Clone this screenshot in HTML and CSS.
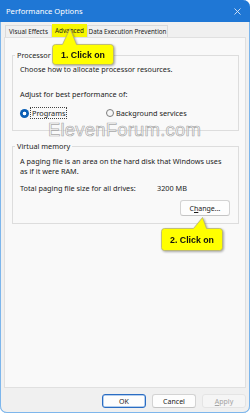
FILE: index.html
```html
<!DOCTYPE html>
<html>
<head>
<meta charset="utf-8">
<link rel="stylesheet" href="styles.css">
</head>
<body>
<div class="window">
  <div class="titlebar">
    <span class="title">Performance Options</span>
    <svg class="close" width="7" height="7" viewBox="0 0 7 7"><path d="M0.5 0.5L6.5 6.5M6.5 0.5L0.5 6.5" stroke="#dbe8f7" stroke-width="0.9" fill="none"/></svg>
  </div>
  <div class="tabs">
    <div class="tab tab-ve">Visual Effects</div>
    <div class="tab tab-adv">Advanced</div>
    <div class="tab tab-dep">Data Execution Prevention</div>
  </div>
  <div class="panel">
    <fieldset class="group group-proc">
      <legend>Processor</legend>
      <p>Choose how to allocate processor resources.</p>
      <p class="adjust">Adjust for best performance of:</p>
      <div class="radios">
        <div class="opt opt1"><span class="radio on"></span><span class="focus">Programs</span></div>
        <div class="opt"><span class="radio"></span><span>Background services</span></div>
      </div>
    </fieldset>
    <fieldset class="group group-vm">
      <legend>Virtual memory</legend>
      <p>A paging file is an area on the hard disk that Windows uses<br>as if it were RAM.</p>
      <div class="total"><span class="total-label">Total paging file size for all drives:</span><span>3200 MB</span></div>
      <div class="btnrow"><button class="btn change">C<u>h</u>ange...</button></div>
    </fieldset>
  </div>
  <div class="footer">
    <button class="btn ok">OK</button>
    <button class="btn">Cancel</button>
    <button class="btn disabled"><u>A</u>pply</button>
  </div>

  <div class="watermark">ElevenForum.com</div>

  <div class="callout c1">
    <svg width="62" height="37" viewBox="0 0 62 37"><path d="M3.5 16.5H10.5L18 0.5L24.5 16.5H58.5Q61.5 16.5 61.5 19.5V33.5Q61.5 36.5 58.5 36.5H3.5Q0.5 36.5 0.5 33.5V19.5Q0.5 16.5 3.5 16.5Z" fill="#ffff00" stroke="#b4b07a" stroke-width="0.8"/></svg>
    <span class="callout-text">1. Click on</span>
  </div>
  <div class="callout c2">
    <svg width="62" height="34" viewBox="0 0 62 34"><path d="M3.5 11.5H32.5L41.5 0.5L45.5 11.5H58.5Q61.5 11.5 61.5 14.5V30.5Q61.5 33.5 58.5 33.5H3.5Q0.5 33.5 0.5 30.5V14.5Q0.5 11.5 3.5 11.5Z" fill="#ffff00" stroke="#b4b07a" stroke-width="0.8"/></svg>
    <span class="callout-text">2. Click on</span>
  </div>
</div>
</body>
</html>
```
FILE: styles.css
```css
html, body {
  margin: 0;
  padding: 0;
  background: #ffffff;
}
body {
  font-family: "Noto Sans", "Open Sans", sans-serif;
  font-size: 7.3px;
  color: #1b1b1b;
}
.window {
  position: relative;
  width: 250px;
  height: 413px;
  box-sizing: border-box;
  background: #f0f0f0;
  border-radius: 0 7px 7px 7px;
  overflow: hidden;
  box-shadow: inset 1px 0 #7db6ec, inset -1px 0 #7db6ec, inset 0 -1px #7db6ec;
  display: flex;
  flex-direction: column;
}
.titlebar {
  height: 22px;
  flex: none;
  background: #1f77d5;
  color: #ffffff;
  display: flex;
  align-items: center;
  justify-content: space-between;
  padding: 0 9px 0 6px;
  font-size: 7.6px;
}
.close { display: block; }
.tabs {
  display: flex;
  height: 13px;
  margin: 2px 0 0 5px;
  flex: none;
}
.tab {
  box-sizing: border-box;
  height: 13px;
  line-height: 12px;
  text-align: center;
  white-space: nowrap;
  font-size: 6.3px;
  border: 1px solid #dadada;
  border-bottom: none;
  background: #f0f0f0;
}
.tab-ve { width: 47px; margin-top: 1px; height: 12px; line-height: 11px; }
.tab-adv { width: 35px; background: #f7f700; border-color: #f7f700; }
.tab-dep { width: 81px; margin-top: 1px; height: 12px; line-height: 11px; }
.panel {
  flex: none;
  box-sizing: border-box;
  height: 351px;
  margin: 0 4px;
  background: #f9f9f9;
  border: 1px solid #e0e0e0;
  padding-top: 12px;
}
.group {
  margin: 0 6px 0 7px;
  border: 1px solid #dddddd;
  padding: 4px 8px 12px 7px;
  min-width: 0;
}
.group legend {
  padding: 0 2px;
  margin-left: -5px;
  line-height: 10px;
  height: 10px;
}
.group p {
  margin: 0;
  line-height: 10px;
}
.adjust { margin-top: 15px !important; }
.radios {
  display: flex;
  margin-top: 9px;
  height: 10px;
  align-items: center;
}
.opt {
  display: flex;
  align-items: center;
  gap: 2px;
}
.opt1 { width: 86px; }
.radio {
  width: 8px;
  height: 8px;
  border-radius: 50%;
  box-sizing: border-box;
  border: 1px solid #7c7c7c;
  background: #f7f7f7;
}
.radio.on {
  width: 9px;
  height: 9px;
  border: none;
  background: radial-gradient(circle, #ffffff 0 1.7px, #0b5fb5 2.1px);
}
.focus {
  outline: 1px dotted #444444;
  padding: 0 1px;
  line-height: 10px;
}
.group-vm {
  margin-top: 10px;
  padding-top: 5px;
  padding-bottom: 7px;
}
.total {
  display: flex;
  margin-top: 7px;
  line-height: 10px;
}
.total-label { width: 137px; }
.btnrow {
  display: flex;
  justify-content: flex-end;
  margin-top: 7px;
}
.btn {
  font-family: "Noto Sans", "Open Sans", sans-serif;
  font-size: 7px;
  color: #1b1b1b;
  background: #fdfdfd;
  border: 1px solid #d3d3d3;
  border-bottom-color: #c4c4c4;
  border-radius: 3px;
  padding: 0;
  margin: 0;
  box-sizing: border-box;
}
.change {
  width: 50px;
  height: 16px;
}
.footer {
  display: flex;
  justify-content: flex-end;
  gap: 6px;
  margin-top: 6px;
  padding-right: 4px;
}
.footer .btn {
  width: 44px;
  height: 14px;
}
.btn.ok {
  border: 1px solid #2a6cc2;
  box-shadow: inset 0 0 0 0.5px #6ba0e0;
}
.btn.disabled {
  color: #a3a3a3;
  background: #f5f5f5;
  border-color: #e4e4e4;
}
.watermark {
  position: absolute;
  left: 48px;
  top: 120px;
  font-family: "Liberation Sans", Arial, sans-serif;
  font-size: 18.5px;
  line-height: 20px;
  color: rgba(255, 255, 255, 0.75);
  -webkit-text-stroke: 0.7px rgba(140, 140, 140, 0.75);
  letter-spacing: 0.2px;
}
.callout {
  position: absolute;
  filter: drop-shadow(1px 1.5px 1px rgba(0, 0, 0, 0.35));
}
.callout svg { display: block; }
.callout-text {
  position: absolute;
  left: 0;
  right: 0;
  bottom: 0;
  display: flex;
  align-items: center;
  justify-content: center;
  font-family: "Liberation Sans", Arial, sans-serif;
  font-weight: bold;
  font-size: 8.8px;
  color: #111111;
}
.c1 { left: 52px; top: 28px; }
.c1 .callout-text { height: 21px; }
.c2 { left: 161px; top: 217px; }
.c2 .callout-text { height: 23px; }
```
